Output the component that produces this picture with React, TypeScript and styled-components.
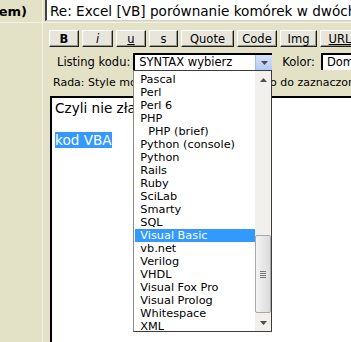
import React from "react";
import styled, { createGlobalStyle } from "styled-components";

const GlobalStyle = createGlobalStyle`
  html, body {
    margin: 0;
    padding: 0;
    overflow: hidden;
    background: #e4e2c6;
  }
  body {
    font-family: "DejaVu Sans", Verdana, sans-serif;
    color: #000;
  }
`;

interface Lang {
  name: string;
  indent?: boolean;
  selected?: boolean;
}

const languages: Lang[] = [
  { name: "Pascal" },
  { name: "Perl" },
  { name: "Perl 6" },
  { name: "PHP" },
  { name: "PHP (brief)", indent: true },
  { name: "Python (console)" },
  { name: "Python" },
  { name: "Rails" },
  { name: "Ruby" },
  { name: "SciLab" },
  { name: "Smarty" },
  { name: "SQL" },
  { name: "Visual Basic", selected: true },
  { name: "vb.net" },
  { name: "Verilog" },
  { name: "VHDL" },
  { name: "Visual Fox Pro" },
  { name: "Visual Prolog" },
  { name: "Whitespace" },
  { name: "XML" },
];

const buttons = [
  { label: "B", width: 30, kind: "bold" },
  { label: "i", width: 31, kind: "italic" },
  { label: "u", width: 30, kind: "underline" },
  { label: "s", width: 29, kind: "plain" },
  { label: "Quote", width: 53, kind: "plain" },
  { label: "Code", width: 40, kind: "plain" },
  { label: "Img", width: 37, kind: "plain" },
  { label: "URL", width: 40, kind: "underline" },
];

const Arrow = ({ up }: { up?: boolean }) => (
  <svg width="7" height="4" viewBox="0 0 7 4">
    <path d={up ? "M0 4 L3.5 0 L7 4 Z" : "M0 0 L7 0 L3.5 4 Z"} fill="#4d4d4d" />
  </svg>
);

const App: React.FC = () => {
  return (
    <>
      <GlobalStyle />
      <Page>
        <LabelCell>
          <b>em)</b>
        </LabelCell>
        <TitleCell>
          <TitleInput>Re: Excel [VB] porównanie komórek w dwóch arkuszach</TitleInput>
        </TitleCell>
        <SideCell />
        <EditorCell>
          <Toolbar>
            {buttons.map((b) => (
              <ToolButton key={b.label} $width={b.width} $kind={b.kind}>
                {b.label}
              </ToolButton>
            ))}
          </Toolbar>
          <OptionsRow>
            <span>Listing kodu:</span>
            <SelectWrap>
              <Select $width={139}>
                <SelectText>SYNTAX wybierz</SelectText>
                <DropButton>
                  <Arrow />
                </DropButton>
              </Select>
              <DropList>
                <Items>
                  {languages.map((l) => (
                    <Item key={l.name} $indent={l.indent} $selected={l.selected}>
                      {l.name}
                    </Item>
                  ))}
                </Items>
                <ScrollBar>
                  <ScrollArrow>
                    <Arrow up />
                  </ScrollArrow>
                  <Track>
                    <Thumb>
                      <Grip />
                      <Grip />
                      <Grip />
                      <Grip />
                    </Thumb>
                  </Track>
                  <ScrollArrow>
                    <Arrow />
                  </ScrollArrow>
                </ScrollBar>
              </DropList>
            </SelectWrap>
            <ColorLabel>Kolor:</ColorLabel>
            <Select $width={60}>
              <SelectText>Domyślny</SelectText>
            </Select>
          </OptionsRow>
          <Hint>Rada: Style mogą być stosowane szybko do zaznaczonego tekstu</Hint>
          <TextArea>
            <Line>Czyli nie złapie tego kodu?</Line>
            <Line>&nbsp;</Line>
            <Line>
              <Selected>kod VBA</Selected>
            </Line>
          </TextArea>
        </EditorCell>
      </Page>
    </>
  );
};

export default App;

const Page = styled.div`
  width: 351px;
  height: 342px;
  display: grid;
  grid-template-columns: 42px 1fr;
  grid-template-rows: 22px 1fr;
  gap: 1px;
  background: #f4f2e4;
  overflow: hidden;
`;

/* left label column */
const LabelCell = styled.div`
  background: #e4e2c6;
  display: flex;
  align-items: center;
  justify-content: flex-end;
  padding-right: 15px;
  font-size: 13px;
  white-space: nowrap;
  overflow: hidden;
`;

const SideCell = styled.div`
  background: #e4e2c6;
`;

/* subject field */
const TitleCell = styled.div`
  background: #e4e2c6;
  padding-left: 2px;
  overflow: hidden;
`;

const TitleInput = styled.div`
  box-sizing: border-box;
  margin-top: -2px;
  height: 23px;
  width: 340px;
  background: #fff;
  border-style: solid;
  border-width: 2px 1px 1px 2px;
  border-color: #404040 #d4d0c8 #d4d0c8 #404040;
  padding: 3px 0 0 3px;
  font-size: 13.6px;
  line-height: 16px;
  white-space: nowrap;
  overflow: hidden;
`;

/* editor area */
const EditorCell = styled.div`
  background: #e4e2c6;
  overflow: hidden;
  display: flex;
  flex-direction: column;
  padding-top: 7px;
`;

const Toolbar = styled.div`
  display: flex;
  gap: 3px;
  padding-left: 6px;
  white-space: nowrap;
`;

const ToolButton = styled.div<{ $width: number; $kind: string }>`
  box-sizing: border-box;
  flex: none;
  width: ${(p) => p.$width}px;
  height: 17px;
  background: #e8e6dc;
  border: 1px solid;
  border-color: #ffffff #202020 #202020 #ffffff;
  box-shadow: inset -1px -1px 0 #9a988c;
  display: flex;
  align-items: center;
  justify-content: center;
  font-size: 11.5px;
  font-weight: ${(p) => (p.$kind === "bold" ? "bold" : "normal")};
  font-style: ${(p) => (p.$kind === "italic" ? "italic" : "normal")};
  text-decoration: ${(p) => (p.$kind === "underline" ? "underline" : "none")};
`;

const OptionsRow = styled.div`
  display: flex;
  align-items: center;
  margin-top: 6px;
  padding-left: 14px;
  font-size: 11.5px;
  white-space: nowrap;
  gap: 3px;
`;

const ColorLabel = styled.span`
  margin-left: 7px;
  margin-right: 3px;
`;

const SelectWrap = styled.div`
  position: relative;
`;

const Select = styled.div<{ $width: number }>`
  box-sizing: border-box;
  flex: none;
  width: ${(p) => p.$width}px;
  height: 17px;
  background: #fff;
  border-style: solid;
  border-width: 2px 0 0 2px;
  border-color: #000;
  display: flex;
  align-items: center;
  overflow: hidden;
`;

const SelectText = styled.span`
  flex: 1;
  padding-left: 4px;
  font-size: 11.5px;
  line-height: 15px;
  white-space: nowrap;
  overflow: hidden;
`;

const DropButton = styled.div`
  width: 16px;
  height: 15px;
  background: linear-gradient(#d6e2fb, #b3c8f3);
  border-left: 1px solid #a5bbe6;
  display: flex;
  align-items: center;
  justify-content: center;
`;

/* open dropdown list, overlays the hint and textarea */
const DropList = styled.div`
  position: absolute;
  top: 100%;
  left: 0;
  z-index: 5;
  box-sizing: border-box;
  width: 139px;
  height: 262px;
  background: #fff;
  border: 1px solid #3c3c3c;
  border-left-color: #8a8a8a;
  display: flex;
  overflow: hidden;
`;

const Items = styled.div`
  flex: 1;
  padding-top: 2px;
  overflow: hidden;
`;

const Item = styled.div<{ $indent?: boolean; $selected?: boolean }>`
  height: 13px;
  line-height: 13px;
  font-size: 11.3px;
  padding-left: ${(p) => (p.$indent ? 13 : 5)}px;
  margin-left: 1px;
  white-space: nowrap;
  background: ${(p) => (p.$selected ? "#3399ff" : "transparent")};
  color: ${(p) => (p.$selected ? "#fff" : "#000")};
`;

const ScrollBar = styled.div`
  width: 16px;
  flex: none;
  background: #f1f0ec;
  display: flex;
  flex-direction: column;
`;

const ScrollArrow = styled.div`
  height: 17px;
  display: flex;
  align-items: center;
  justify-content: center;
`;

const Track = styled.div`
  flex: 1;
  padding-top: 147px;
  padding-bottom: 1px;
  display: flex;
`;

const Thumb = styled.div`
  flex: 1;
  box-sizing: border-box;
  border: 1px solid #a8a8a8;
  border-radius: 2px;
  background: linear-gradient(90deg, #f4f4f4, #dcdcdc);
  display: flex;
  flex-direction: column;
  align-items: center;
  justify-content: center;
  gap: 1px;
`;

const Grip = styled.div`
  width: 6px;
  height: 1px;
  background: #777;
`;

const Hint = styled.div`
  margin-top: 6px;
  padding-left: 10px;
  font-size: 11px;
  line-height: 14px;
  white-space: nowrap;
`;

const TextArea = styled.div`
  flex: 1;
  margin-top: 6px;
  margin-left: 7px;
  width: 340px;
  background: #fff;
  border-style: solid;
  border-width: 2px 0 0 2px;
  border-color: #000;
  padding: 2px 3px;
  font-size: 13.6px;
  line-height: 16px;
`;

const Line = styled.div`
  white-space: nowrap;
`;

const Selected = styled.span`
  background: #3399ff;
  color: #fff;
`;
